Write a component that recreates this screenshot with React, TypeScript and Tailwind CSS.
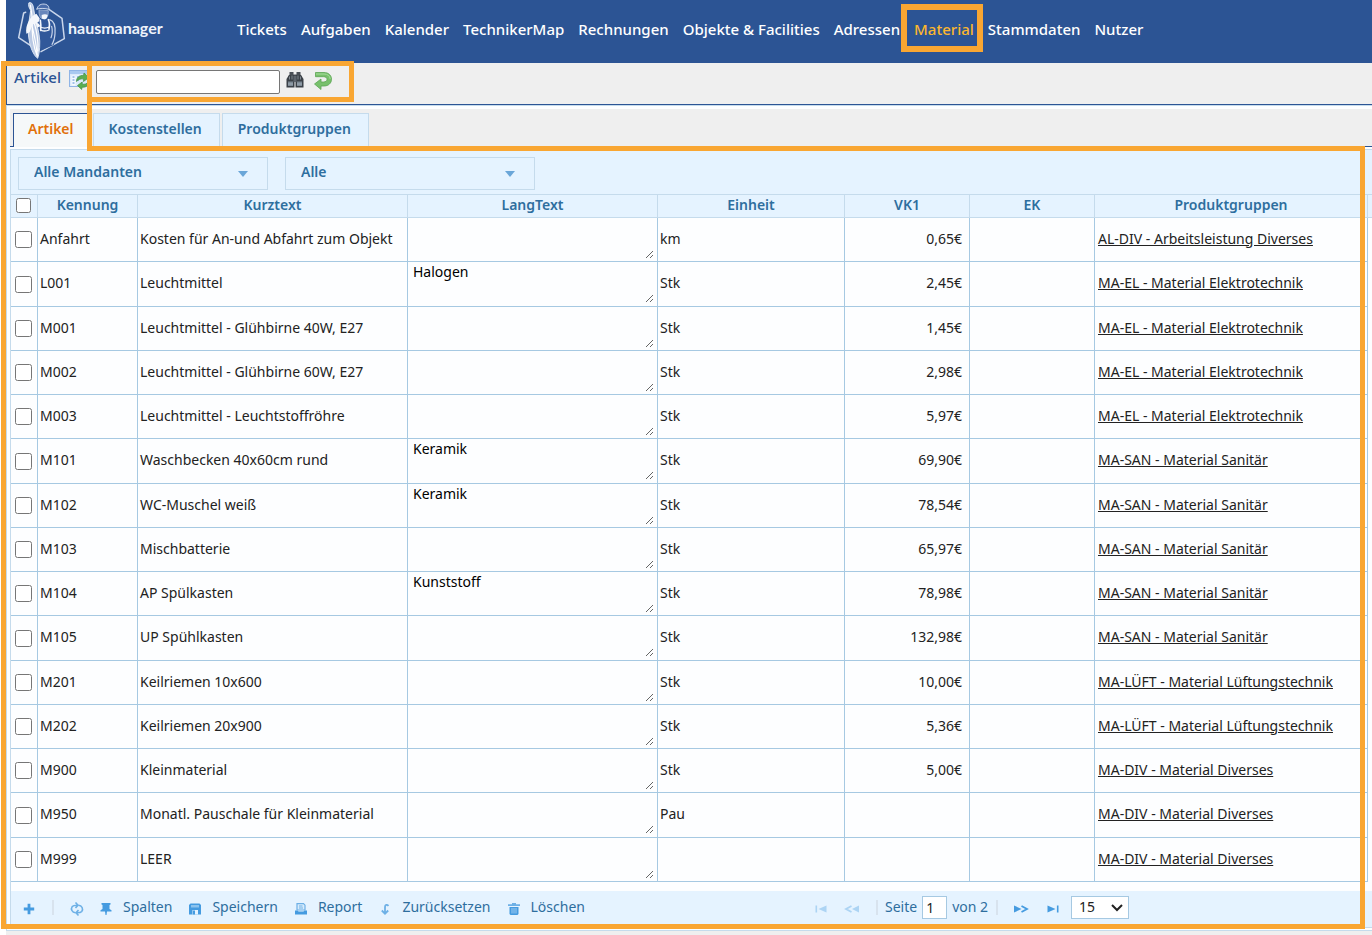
import React from "react";

type Article = {
  id: string;
  short: string;
  long: string;
  unit: string;
  price: string;
  group: string;
};

const EL = "MA-EL - Material Elektrotechnik";
const SAN = "MA-SAN - Material Sanitär";
const LUEFT = "MA-LÜFT - Material Lüftungstechnik";
const DIV = "MA-DIV - Material Diverses";

const articles: Article[] = [
  { id: "Anfahrt", short: "Kosten für An-und Abfahrt zum Objekt", long: "", unit: "km", price: "0,65€", group: "AL-DIV - Arbeitsleistung Diverses" },
  { id: "L001", short: "Leuchtmittel", long: "Halogen", unit: "Stk", price: "2,45€", group: EL },
  { id: "M001", short: "Leuchtmittel - Glühbirne 40W, E27", long: "", unit: "Stk", price: "1,45€", group: EL },
  { id: "M002", short: "Leuchtmittel - Glühbirne 60W, E27", long: "", unit: "Stk", price: "2,98€", group: EL },
  { id: "M003", short: "Leuchtmittel - Leuchtstoffröhre", long: "", unit: "Stk", price: "5,97€", group: EL },
  { id: "M101", short: "Waschbecken 40x60cm rund", long: "Keramik", unit: "Stk", price: "69,90€", group: SAN },
  { id: "M102", short: "WC-Muschel weiß", long: "Keramik", unit: "Stk", price: "78,54€", group: SAN },
  { id: "M103", short: "Mischbatterie", long: "", unit: "Stk", price: "65,97€", group: SAN },
  { id: "M104", short: "AP Spülkasten", long: "Kunststoff", unit: "Stk", price: "78,98€", group: SAN },
  { id: "M105", short: "UP Spühlkasten", long: "", unit: "Stk", price: "132,98€", group: SAN },
  { id: "M201", short: "Keilriemen 10x600", long: "", unit: "Stk", price: "10,00€", group: LUEFT },
  { id: "M202", short: "Keilriemen 20x900", long: "", unit: "Stk", price: "5,36€", group: LUEFT },
  { id: "M900", short: "Kleinmaterial", long: "", unit: "Stk", price: "5,00€", group: DIV },
  { id: "M950", short: "Monatl. Pauschale für Kleinmaterial", long: "", unit: "Pau", price: "", group: DIV },
  { id: "M999", short: "LEER", long: "", unit: "", price: "", group: DIV },
];

const navItems = [
  "Tickets",
  "Aufgaben",
  "Kalender",
  "TechnikerMap",
  "Rechnungen",
  "Objekte & Facilities",
  "Adressen",
  "Material",
  "Stammdaten",
  "Nutzer",
];

function Logo() {
  return (
    <svg viewBox="15 3 150 180" className="h-[60px] w-[50px] shrink-0" fill="none" strokeLinecap="round" strokeLinejoin="round" aria-hidden="true">
      <path d="M44 40 38 42 23 116l36 24M90 158l70-39-7-61-38-26" stroke="#c9d6eb" strokeWidth="4.500" />
      <path d="M78 30c2-12 14-17 26-14 8 2 10 8 10 15-12-3-24-4-36-1Z" fill="#4a6dab" stroke="#c9d6eb" strokeWidth="3" />
      <path d="M84 34c-1 14 4 26 14 28 10-2 14-12 14-26Z" fill="#6886bb" stroke="#b9c9e4" strokeWidth="2" />
      <path d="M92 48c6-3 14-3 18 0l-3 10-8 5-7-5Z" fill="#f4f7fc" />
      <path d="M82 58c-4 22-2 44 4 74l6 22 36-16c8-20 10-48 4-66-8-8-18-10-26-10Z" fill="#31589a" />
      <path d="M88 64c2 12 2 20 1 30M112 62c4 8 4 18 2 28" stroke="#f4f7fc" strokeWidth="5" />
      <path d="M88 84c8 4 18 4 27 0M90 94c8 3 16 3 24-1" stroke="#f4f7fc" strokeWidth="4" />
      <path d="M116 62c14 4 18 20 16 42-1 14-5 26-9 32M122 82c3 12 2 24-2 34" stroke="#c9d6eb" strokeWidth="3.500" />
      <path d="M54 12c6-4 11 2 13 12l8 44c8 24 13 52 11 78-1 14-3 24-6 32-9-6-19-24-24-46-5-24-6-46-2-64l5-34c-6-8-8-18-5-22Z" fill="#b9c9e4" stroke="#e9eff8" strokeWidth="2.500" />
      <path d="M58 18c4 22 6 36 6 52-2 30 2 70 15 102M62 76c6 24 14 60 17 92M70 72c7 24 12 56 11 84" stroke="#fff" strokeWidth="3.500" />
      <path d="M76 44c-10 4-18 12-24 24-5 10-8 22-6 36l10-4c4-10 6-16 10-24l8-2c8-2 12-8 12-16Z" fill="#f4f7fc" />
      <path d="M74 70c8 2 12 6 14 12l-10 4Z" fill="#f4f7fc" />
    </svg>
  );
}

function SheetIcon() {
  return (
    <svg viewBox="0 0 20 20" className="size-5" aria-hidden="true">
      <rect x=".5" y=".5" width="18" height="16" fill="#dceafb" stroke="#8fb4e6" />
      <path d="M1 2.500h17" stroke="#a9c9f0" strokeWidth="3" />
      <path d="M2.500 5.500h4v10h-4zM7.500 5.500h10v3h-10z" fill="#f7fbff" />
      <path d="M3.500 7h2M3.500 10h2M3.500 13h2M8 7h3M8 10h2" stroke="#86aee4" strokeWidth="1.600" />
      <path d="M7.500 11.500c0-4 3-6.500 7-6l.5-2.500 5 4.500-5.500 4 .2-2.500c-3-.5-5.200.5-7.200 2.500Z" fill="#5cae52" stroke="#3f8f43" strokeWidth=".7" />
      <path d="M19.500 12c0 4-3 5.500-6.500 5.200l-.3 2.300-4.200-4 4.700-3.500v2.200c2.500.3 4.300-.2 6.300-2.200Z" fill="#5cae52" stroke="#3f8f43" strokeWidth=".7" />
    </svg>
  );
}

function BinocularsIcon() {
  return (
    <svg viewBox="0 0 18 18" className="size-[18px]" aria-hidden="true">
      <path d="M3.500 3.500V1h4v2.500h3V1h4v2.500L16 6H2Z" fill="#4a4f56" />
      <path d="M.5 8 3 4h5.500v12.500H.5Z" fill="#3b4148" />
      <path d="M17.500 8 15 4H9.500v12.500h8Z" fill="#3b4148" />
      <path d="M7.500 5h3v6h-3z" fill="#5d646c" />
      <path d="M2 10.500h5v4.500H2zM11 10.500h5v4.500h-5z" fill="#7d8994" />
      <path d="M2 13h5M11 13h5" stroke="#9fabb6" />
      <path d="M3.500 5.500v3M6 4.500v4M12 4.500v4M14.500 5.500v3" stroke="#8b939b" strokeWidth=".9" />
    </svg>
  );
}

function BackIcon() {
  return (
    <svg viewBox="0 0 20 20" className="size-5" aria-hidden="true">
      <path d="M2.500 1.500h8.500c4.500 0 7.500 2.800 7.500 6.700S15.500 15 11 15H8v3.500L1.500 13 8 8v3h2.500c2.300 0 3.500-1.100 3.500-2.700S12.800 5.700 10.500 5.700h-8Z" fill="#78c06c" stroke="#5aa453" strokeWidth=".8" strokeLinejoin="round" />
      <path d="M3 3h8c3.500 0 6 1.800 6.200 5" fill="none" stroke="#a5dc9c" />
    </svg>
  );
}

const iconPaths: Record<string, React.ReactNode> = {
  plus: <path d="M6 .8v10.400M.8 6h10.400" stroke="#459be0" strokeWidth="2.800" />,
  refresh: (
    <g stroke="#6db0e6" strokeWidth="1.600" fill="none">
      <path d="M4.500 9.800C1 9.500-.5 6 1.200 3.600 2.200 2.400 3.500 2.200 6 2.200M4.500-.5 7 2.200 4.500 5" />
      <path d="M7.500 2.200C11 2.500 12.500 6 10.800 8.400 9.800 9.600 8.500 9.800 6 9.800M7.500 7 5 9.800l2.500 2.700" />
    </g>
  ),
  pin: <path d="M1.500 0h9v1.500L9.500 2v4l2 1.200V8.500H7L6.500 12h-1L5 8.500H.5V7.200l2-1.200V2l-1-.5Z" fill="#459be0" />,
  disk: (
    <g>
      <path d="M1.500.5h9L12 2V11.500H0V2Z" fill="#459be0" />
      <path d="M2 2h8v2.500H2z" fill="#8cc3ee" />
      <path d="M3.500 7h5.500v4.500H3.500z" fill="#e5f3ff" />
      <path d="M4 7.500h2v4H4z" fill="#459be0" />
    </g>
  ),
  printer: (
    <g>
      <path d="M2 .7h6.500l1.500 1.500V7H2Z" fill="#d8ecfc" stroke="#6db0e6" strokeWidth="1.200" />
      <path d="M4 3h3.500M4 5h4" stroke="#6db0e6" />
      <path d="M0 7.500h2.500l1 1h5l1-1H12v4H0Z" fill="#459be0" />
    </g>
  ),
  reset: <path d="M9.500 2.800C8 1.200 6 1.600 6 4v6M2.800 7.500 6 10.700 9.200 7.500" stroke="#6db0e6" strokeWidth="1.800" fill="none" />,
  trash: (
    <g>
      <path d="M4 0h4v1.200h4V3H0V1.200h4Z" fill="#6db0e6" />
      <path d="M1.500 4h9V11L9.500 12h-7L1.500 11Z" fill="#459be0" />
      <path d="M4 5v5.500M6 5v5.500M8 5v5.500" stroke="#a9d3f4" strokeWidth=".9" />
    </g>
  ),
  first: <path d="M.5 2.500h1.600v7H.5zM11.500 2.500v7L3.500 6Z" fill="#459be0" />,
  prev: (
    <g>
      <path d="M13 2.500v7L6 6Z" fill="#459be0" />
      <path d="M5.500 3 0 6l5.500 3" stroke="#459be0" strokeWidth="1.800" fill="none" />
    </g>
  ),
  next: (
    <g>
      <path d="M-1 2.500v7L6.500 6Z" fill="#459be0" />
      <path d="M6.500 3 12 6 6.500 9" stroke="#459be0" strokeWidth="1.800" fill="none" />
    </g>
  ),
  last: <path d="M9.900 2.500h1.600v7H9.900zM.5 2.500v7L8.500 6Z" fill="#459be0" />,
};

function PagerIcon({ name }: { name: string }) {
  return (
    <svg viewBox="0 0 12 12" className="mt-[3px] size-3 shrink-0 overflow-visible" aria-hidden="true">
      {iconPaths[name]}
    </svg>
  );
}

function ToolButton({ icon, label }: { icon: string; label: string }) {
  return (
    <button type="button" className="flex items-center gap-[11px]">
      <PagerIcon name={icon} />
      <span>{label}</span>
    </button>
  );
}

function PagerSeparator() {
  return <span className="h-[15px] w-[2px] bg-[#d8e3ee]" aria-hidden="true" />;
}

function FilterSelect({ label, value }: { label: string; value: string }) {
  return (
    <span className="relative block w-[250px]">
      <select aria-label={label} className="h-[33px] w-full appearance-none rounded-none border border-[#c5dbec] bg-[#e5f3ff] pr-8 pb-[3px] pl-[15px] text-sm font-semibold text-[#2e6e9e]">
        <option>{value}</option>
      </select>
      <svg viewBox="0 0 10 6" className="pointer-events-none absolute top-[14px] right-5 h-[6px] w-[10px]" aria-hidden="true">
        <path d="M0 0h10L5 6Z" fill="#6aa6d8" />
      </svg>
    </span>
  );
}

const headCell = "h-6 border-t border-r border-b border-[#c5dbec] bg-[#e5f3ff] p-0 pb-[2px] text-center align-middle font-semibold text-[#2e6e9e]";
const checkCell = "border-r border-b border-[#a6c9e2] p-0 pr-px align-middle";
const bodyCell = "border-r border-b border-[#a6c9e2] p-0 pb-[2px] align-middle";

export default function App() {
  return (
    <div className="min-h-screen bg-white pl-[6px] font-['Noto_Sans',sans-serif] text-sm text-[#222222]">
      <div className="min-h-screen bg-[#efefef]">
        <header className="flex h-[63px] items-start bg-[#2c5494] pl-[10px]">
          <a href="#start" className="flex w-[221px] shrink-0 items-start">
            <Logo />
            <span className="mt-4 ml-[2px] font-['Lato',sans-serif] text-base leading-6 font-bold text-[#eef3fb]">hausmanager</span>
          </a>
          <nav className="flex gap-[14px] pt-[19px] text-[15px] leading-5 font-medium whitespace-nowrap text-white">
            {navItems.map((item) =>
              item === "Material" ? (
                <a key={item} href="#material" className="relative text-[#fbb72f]">
                  {item}
                  <span className="pointer-events-none absolute -top-[15px] -right-[9px] -bottom-[13px] -left-[13px] border-6 border-[#f9a632]" />
                </a>
              ) : (
                <a key={item} href={"#" + item.toLowerCase()}>
                  {item}
                </a>
              )
            )}
          </nav>
        </header>

        <main className="relative">
          <section className="flex h-[42px] items-start border-b border-l border-[#2c5494] pl-[7px]">
            <h1 className="w-[55px] pt-1 text-[15px] leading-5 font-medium text-[#2c5494]">Artikel</h1>
            <button type="button" aria-label="Liste aktualisieren" className="mt-[7px] w-[27px]">
              <SheetIcon />
            </button>
            <input type="text" aria-label="Suche" className="mt-[7px] h-6 w-[184px] rounded-[2px] border border-[#767676] bg-white px-1" />
            <button type="button" aria-label="Suchen" className="mt-2 ml-[6px]">
              <BinocularsIcon />
            </button>
            <button type="button" aria-label="Suche zurücksetzen" className="mt-2 ml-[9px]">
              <BackIcon />
            </button>
          </section>

          <section className="border-b border-l border-t border-[#c5dbec] bg-[#fdfeff] pt-[3px] pb-[2px] pl-[3px]">
            <div className="flex h-[38px] items-end gap-[2px] border-b border-[#2c5494] bg-[#efefef] pl-[3px] font-semibold text-[#2e6e9e]" role="tablist">
              <button type="button" role="tab" aria-selected="true" className="-mb-px h-[34px] border border-b-0 border-[#2c5494] bg-[#f5f8f9] pr-4 pb-[3px] pl-[14px] text-[#e17009]">
                Artikel
              </button>
              <button type="button" role="tab" aria-selected="false" className="h-[33px] border border-b-0 border-[#c5dbec] bg-[#e5f3ff] pr-[17px] pb-[2px] pl-[15px]">
                Kostenstellen
              </button>
              <button type="button" role="tab" aria-selected="false" className="h-[33px] border border-b-0 border-[#c5dbec] bg-[#e5f3ff] pr-[17px] pb-[2px] pl-[15px]">
                Produktgruppen
              </button>
            </div>

            <div className="mt-[2px] border border-r-0 border-[#c5dbec]">
              <div className="flex h-11 items-start gap-[17px] bg-[#e5f3ff] pt-[7px] pl-[7px]">
                <FilterSelect label="Mandant" value="Alle Mandanten" />
                <FilterSelect label="Produktgruppe" value="Alle" />
              </div>

              <table className="w-full table-fixed border-separate border-spacing-0">
                <colgroup>
                  <col className="w-[27px]" />
                  <col className="w-[100px]" />
                  <col className="w-[270px]" />
                  <col className="w-[250px]" />
                  <col className="w-[187px]" />
                  <col className="w-[125px]" />
                  <col className="w-[125px]" />
                  <col />
                  <col className="w-1" />
                </colgroup>
                <thead>
                  <tr>
                    <th className={headCell}>
                      <input type="checkbox" aria-label="Alle auswählen" className="ml-[5px] block size-[15px]" />
                    </th>
                    {["Kennung", "Kurztext", "LangText", "Einheit", "VK1", "EK", "Produktgruppen"].map((title) => (
                      <th key={title} scope="col" className={headCell}>
                        {title}
                      </th>
                    ))}
                    <td className="border-t border-b border-[#c5dbec] bg-[#e5f3ff] p-0" />
                  </tr>
                </thead>
                <tbody>
                  {articles.map((row) => (
                    <tr key={row.id} className="h-11 bg-[#fdfeff] nth-[4n+2]:h-[45px]">
                      <td className={checkCell}>
                        <input type="checkbox" aria-label={row.id + " auswählen"} className="mx-auto block size-[17px]" />
                      </td>
                      <td className={bodyCell + " pl-[2px]"}>{row.id}</td>
                      <td className={bodyCell + " pl-[2px] whitespace-nowrap"}>{row.short}</td>
                      <td className={bodyCell + " pr-[3px]"}>
                        <textarea
                          aria-label={"LangText " + row.id}
                          defaultValue={row.long}
                          className="block h-10 w-full resize bg-transparent px-[5px] leading-[18px] text-black"
                        />
                      </td>
                      <td className={bodyCell + " pl-[2px]"}>{row.unit}</td>
                      <td className={bodyCell + " pr-[7px] text-right"}>{row.price}</td>
                      <td className={bodyCell} />
                      <td className={bodyCell + " pl-[3px] whitespace-nowrap"}>
                        <a href="#produktgruppe" className="underline">
                          {row.group}
                        </a>
                      </td>
                      <td className="p-0" />
                    </tr>
                  ))}
                </tbody>
              </table>

              <div className="mt-[9px] flex h-[36px] items-center bg-[#e5f3ff] pb-1 text-[#2e6e9e]">
                <div className="flex w-[59%] shrink-0 items-center gap-[17px] pl-3">
                  <button type="button" aria-label="Neuer Artikel">
                    <PagerIcon name="plus" />
                  </button>
                  <PagerSeparator />
                  <button type="button" aria-label="Neu laden">
                    <PagerIcon name="refresh" />
                  </button>
                  <ToolButton icon="pin" label="Spalten" />
                  <ToolButton icon="disk" label="Speichern" />
                  <ToolButton icon="printer" label="Report" />
                  <ToolButton icon="reset" label="Zurücksetzen" />
                  <ToolButton icon="trash" label="Löschen" />
                </div>
                <div className="flex items-center pl-px">
                  <button type="button" disabled aria-label="Erste Seite" className="opacity-35">
                    <PagerIcon name="first" />
                  </button>
                  <button type="button" disabled aria-label="Vorherige Seite" className="mr-[18px] ml-[19px] opacity-35">
                    <PagerIcon name="prev" />
                  </button>
                  <PagerSeparator />
                  <label className="ml-[7px] flex items-center gap-[5px]">
                    Seite
                    <input type="text" defaultValue="1" className="h-[23px] w-[25px] border border-[#a6c9e2] bg-white pl-[3px] text-[#222222]" />
                  </label>
                  <span className="mr-2 ml-[5px]">von 2</span>
                  <PagerSeparator />
                  <button type="button" aria-label="Nächste Seite" className="ml-[17px]">
                    <PagerIcon name="next" />
                  </button>
                  <button type="button" aria-label="Letzte Seite" className="mr-3 ml-5">
                    <PagerIcon name="last" />
                  </button>
                  <span className="relative block">
                    <select aria-label="Einträge pro Seite" className="h-[23px] w-[58px] appearance-none rounded-none border border-[#a6c9e2] bg-white pl-[7px] text-[#222222]">
                      <option>15</option>
                    </select>
                    <svg viewBox="0 0 12 8" className="pointer-events-none absolute top-2 right-[6px] h-2 w-3" aria-hidden="true">
                      <path d="m1 1 5 5 5-5" fill="none" stroke="#222222" strokeWidth="2" />
                    </svg>
                  </span>
                </div>
              </div>
            </div>
          </section>

          <div className="pointer-events-none absolute -top-[2px] right-[7px] bottom-[2px] -left-[5px] border-b-5 border-l-5 border-[#f9a632]" />
          <div className="pointer-events-none absolute -top-[2px] -left-[5px] h-[90px] w-[91px] border-t-5 border-r-5 border-[#f9a632]" />
          <div className="pointer-events-none absolute top-[83px] right-[7px] bottom-[2px] left-[81px] border-t-5 border-r-5 border-[#f9a632]" />
          <div className="pointer-events-none absolute -top-[2px] left-[81px] h-[41px] w-[267px] border-5 border-[#f9a632]" />
        </main>
      </div>
    </div>
  );
}
